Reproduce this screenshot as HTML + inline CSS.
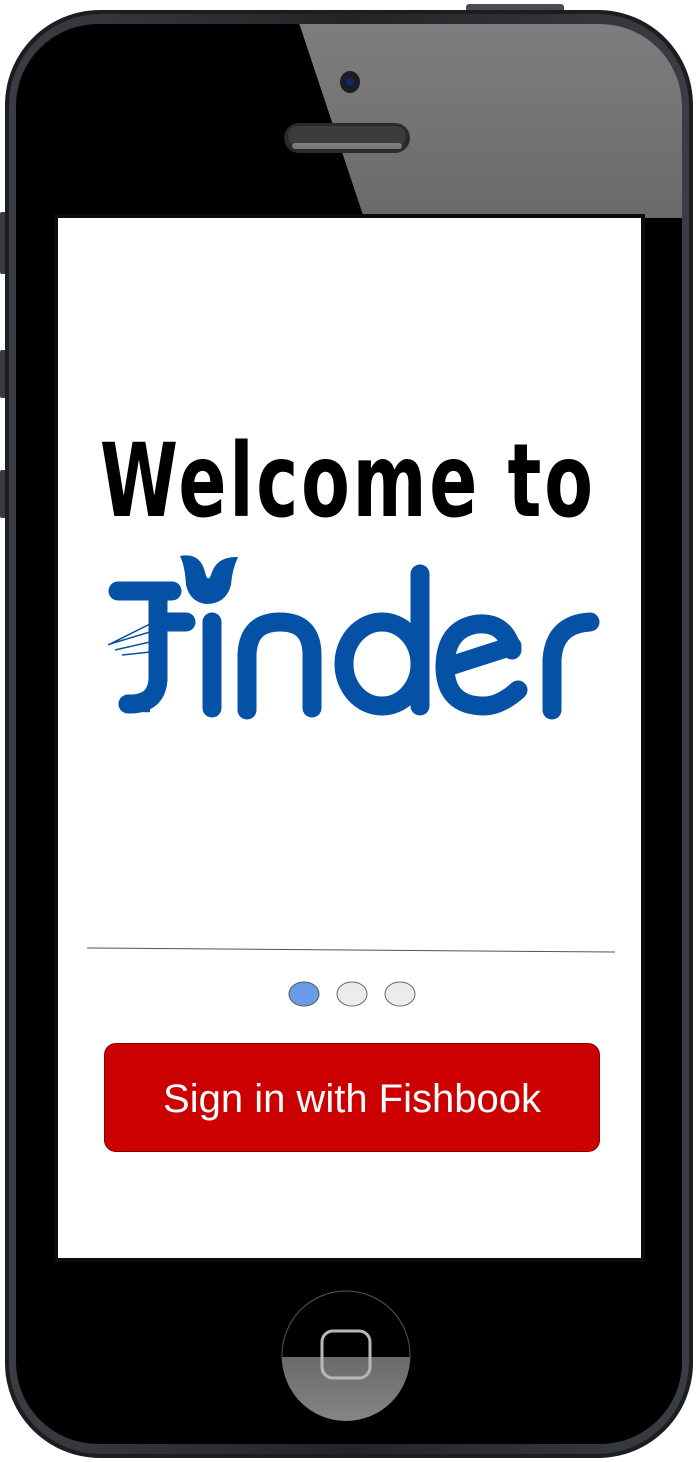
<!DOCTYPE html>
<html><head><meta charset="utf-8"><style>
html,body{margin:0;padding:0;background:#fff;}
body{width:698px;height:1462px;position:relative;overflow:hidden;font-family:"Liberation Sans",sans-serif;}
.abs{position:absolute;}
</style></head><body>
<svg class="abs" style="left:0;top:0" width="698" height="1462" viewBox="0 0 698 1462">
  <defs>
    <linearGradient id="rim" x1="0" y1="0" x2="1" y2="0">
      <stop offset="0" stop-color="#3a3d42"/><stop offset="0.5" stop-color="#222428"/><stop offset="1" stop-color="#3a3d42"/>
    </linearGradient>
    <linearGradient id="glare" x1="0" y1="0" x2="0" y2="1">
      <stop offset="0" stop-color="#7e7e7e"/><stop offset="1" stop-color="#6a6a6a"/>
    </linearGradient>
    <linearGradient id="home" x1="0" y1="0" x2="0" y2="1">
      <stop offset="0" stop-color="#6a6a6a"/><stop offset="1" stop-color="#858585"/>
    </linearGradient>
    <clipPath id="inner"><rect x="16" y="24" width="666" height="1420" rx="82"/></clipPath>
  </defs>
  <rect x="466" y="4" width="98" height="10" rx="3" fill="#4a4c50"/>
  <rect x="0" y="212" width="6" height="62" rx="2" fill="#3a3c40"/>
  <rect x="0" y="350" width="6" height="48" rx="2" fill="#3a3c40"/>
  <rect x="0" y="470" width="6" height="48" rx="2" fill="#3a3c40"/>
  <rect x="5" y="10" width="688" height="1448" rx="95" fill="#1c1d20"/>
  <rect x="9" y="14" width="680" height="1440" rx="92" fill="url(#rim)"/>
  <rect x="16" y="24" width="666" height="1420" rx="82" fill="#000"/>
  <g clip-path="url(#inner)">
    <polygon points="298,20 700,20 700,218 364,218" fill="url(#glare)"/>
  </g>
  <ellipse cx="350" cy="82" rx="10" ry="11" fill="#1a1d24"/>
  <circle cx="350" cy="82" r="4" fill="#0c2a6a"/>
  <rect x="284" y="123" width="126" height="30" rx="15" fill="#2a2a2a"/>
  <rect x="288" y="126" width="118" height="20" rx="10" fill="#3c3c3c"/>
  <rect x="292" y="143" width="110" height="6" rx="3" fill="#9a9a9a" opacity="0.7"/>
  <rect x="54" y="214" width="591" height="1048" fill="#0c0c0c"/>
  <rect x="58" y="218" width="583" height="1040" fill="#fff"/>
  <circle cx="346" cy="1355" r="64" fill="#000" stroke="#555" stroke-width="1"/>
  <path d="M282,1357 A64,64 0 0 0 410,1357 Z" fill="url(#home)"/>
  <rect x="322" y="1331" width="48" height="47" rx="11" fill="none" stroke="#b8b8b8" stroke-width="3"/>

  <g stroke="#0451a5" stroke-width="19" stroke-linecap="round" fill="none">
    <path d="M118,591 L172,591"/>
    <path d="M158,591 L158,680 Q156,705 128,704"/>
    <path d="M158,622 L186,622"/>
    <path d="M212,622 L212,708"/>
    <path d="M247,710 L247,655 Q248,622 280,622 Q312,622 312,655 L312,708"/>
    <ellipse cx="382" cy="664" rx="38" ry="42"/>
    <path d="M420,574 L420,706"/>
    <path d="M512,650 Q505,622 478,624 Q445,628 445,668 Q446,706 484,706 Q500,706 518,690"/>
    <path d="M450,666 L512,646"/>
    <path d="M552,710 L552,660 Q554,624 590,622"/>
  </g>
  <path d="M180,556 Q200,552 205,572 Q208,585 212,572 Q218,556 238,557 Q232,570 231,585 Q226,604 206,604 Q190,602 186,585 Q185,566 180,556 Z" fill="#0451a5"/>
  <path d="M110,644 L150,632 M115,650 L150,642 M122,655 L150,652 M108,645 L150,624" stroke="#0451a5" stroke-width="1.5"/>
  <path d="M120,700 Q140,694 150,688 L150,712 Q130,714 120,700 Z" fill="#0451a5"/>

  <line x1="87" y1="948" x2="615" y2="952" stroke="#555" stroke-width="1"/>
  <ellipse cx="304" cy="994" rx="15" ry="12" fill="#6a9de8" stroke="#555" stroke-width="1"/>
  <ellipse cx="352" cy="994" rx="15" ry="12" fill="#ececec" stroke="#666" stroke-width="1"/>
  <ellipse cx="400" cy="994" rx="15" ry="12" fill="#ececec" stroke="#666" stroke-width="1"/>
</svg>

<div class="abs" style="left:-40px;top:422px;width:800px;text-align:center;white-space:nowrap;font-family:'DejaVu Sans',sans-serif;font-weight:bold;font-size:102px;letter-spacing:4px;color:#000;line-height:120px;transform:scaleX(0.695);transform-origin:360px 0;">Welcome to</div>

<div class="abs" style="left:104px;top:1043px;width:494px;height:107px;background:#cc0000;border:1px solid #8a0000;border-radius:12px;color:#fff;font-size:40px;text-align:center;line-height:110px;white-space:nowrap;">Sign in with Fishbook</div>
</body></html>
